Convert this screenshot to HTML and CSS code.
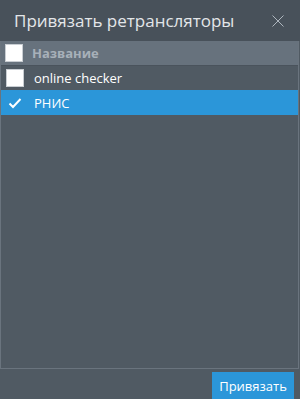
FILE: index.html
```html
<!DOCTYPE html>
<html lang="ru">
<head>
    <meta charset="UTF-8">
    <meta name="viewport" content="width=device-width, initial-scale=1">
    <title>Привязать ретрансляторы</title>
    <link rel="stylesheet" href="styles.css">
</head>
<body>
    <div class="dialog">
        <div class="dialog-header">
            <span class="dialog-title">Привязать ретрансляторы</span>
            <svg class="dialog-close" width="12" height="12" viewBox="0 0 12 12">
                <path d="M0.5 0.5 L11.5 11.5 M11.5 0.5 L0.5 11.5" stroke="#aeb6be" stroke-width="1" fill="none"/>
            </svg>
        </div>

        <div class="grid">
            <div class="grid-head">
                <span class="check"></span>
                <span class="grid-col">Название</span>
            </div>
            <div class="grid-row">
                <span class="check"></span>
                <span class="grid-cell">online checker</span>
            </div>
            <div class="grid-row selected">
                <svg class="tick" width="14" height="12" viewBox="0 0 14 12">
                    <path d="M1.5 6.5 L5 10 L12.5 2" stroke="#ffffff" stroke-width="2" fill="none"/>
                </svg>
                <span class="grid-cell">РНИС</span>
            </div>
        </div>

        <div class="dialog-footer">
            <button class="btn">Привязать</button>
        </div>
    </div>
</body>
</html>
```

FILE: styles.css
```css
html, body {
     margin: 0;
     padding: 0;
 }

body {
     background-color: #505a63;
     font-family: "Open Sans", "Noto Sans", sans-serif;
     color: #ffffff;
 }

.dialog {
     width: 300px;
     height: 399px;
     display: flex;
     flex-direction: column;
 }

.dialog-header {
     height: 41px;
     flex-shrink: 0;
     background-color: #48515a;
     display: flex;
     align-items: center;
     justify-content: space-between;
     padding: 0 16px 0 14px;
     box-sizing: border-box;
 }

.dialog-title {
     font-size: 17px;
     color: #e3e6e9;
     margin-top: -1px;
 }

.dialog-close {
     display: block;
     margin-top: 0;
 }

.grid {
     flex: 1;
     border: 1px solid #6a747e;
     border-top: none;
     margin-right: 1px;
     display: flex;
     flex-direction: column;
 }

.grid-head {
     height: 24px;
     background-color: #67727d;
     display: flex;
     align-items: center;
     padding-left: 4px;
 }

.grid-col {
     font-size: 13px;
     font-weight: bold;
     color: #a7b0b9;
     margin-left: 9px;
 }

.grid-row {
     height: 24px;
     display: flex;
     align-items: center;
     padding-left: 5px;
     border-top: 1px solid #4a535c;
 }

.grid-row.selected {
     background-color: #2b96d9;
     border-top-color: #2b96d9;
 }

.check {
     width: 16px;
     height: 16px;
     background-color: #ffffff;
     border: 1px solid #c9ced3;
     flex-shrink: 0;
 }

.tick {
     margin-left: 2px;
     margin-right: 2px;
     flex-shrink: 0;
 }

.grid-cell {
     font-size: 13px;
     color: #ffffff;
     margin-left: 10px;
 }

.dialog-footer {
     height: 30px;
     flex-shrink: 0;
     display: flex;
     justify-content: flex-end;
     align-items: flex-start;
     padding: 3px 6px 0 0;
     box-sizing: border-box;
 }

.btn {
     height: 27px;
     width: 82px;
     border: none;
     background-color: #2b96d9;
     color: #ffffff;
     font-family: "Open Sans", "Noto Sans", sans-serif;
     font-size: 13px;
     padding: 0;
 }
```
